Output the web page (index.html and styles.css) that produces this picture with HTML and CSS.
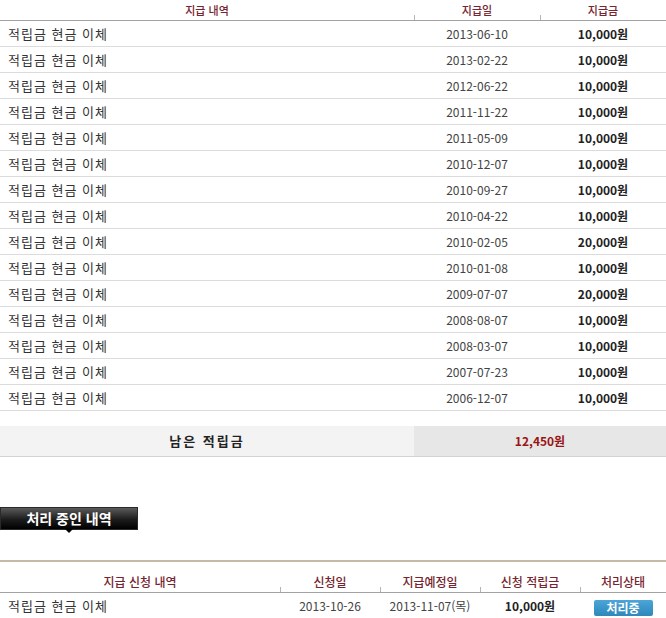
FILE: index.html
```html
<!DOCTYPE html>
<html lang="ko">
<head>
  <meta charset="UTF-8" />
  <meta name="viewport" content="width=device-width, initial-scale=1.0"/>
  <title>적립금 지급 내역</title>
  <link rel="stylesheet" href="styles.css">
</head>
<body>
  <div class="page">
    <table class="list history">
      <colgroup>
        <col class="col-desc" />
        <col class="col-date" />
        <col class="col-amount" />
      </colgroup>
      <thead>
        <tr>
          <th>지급 내역</th>
          <th class="tick">지급일</th>
          <th class="tick">지급금</th>
        </tr>
      </thead>
      <tbody>
        <tr><td class="desc">적립금 현금 이체</td><td class="date">2013-06-10</td><td class="amount">10,000원</td></tr>
        <tr><td class="desc">적립금 현금 이체</td><td class="date">2013-02-22</td><td class="amount">10,000원</td></tr>
        <tr><td class="desc">적립금 현금 이체</td><td class="date">2012-06-22</td><td class="amount">10,000원</td></tr>
        <tr><td class="desc">적립금 현금 이체</td><td class="date">2011-11-22</td><td class="amount">10,000원</td></tr>
        <tr><td class="desc">적립금 현금 이체</td><td class="date">2011-05-09</td><td class="amount">10,000원</td></tr>
        <tr><td class="desc">적립금 현금 이체</td><td class="date">2010-12-07</td><td class="amount">10,000원</td></tr>
        <tr><td class="desc">적립금 현금 이체</td><td class="date">2010-09-27</td><td class="amount">10,000원</td></tr>
        <tr><td class="desc">적립금 현금 이체</td><td class="date">2010-04-22</td><td class="amount">10,000원</td></tr>
        <tr><td class="desc">적립금 현금 이체</td><td class="date">2010-02-05</td><td class="amount">20,000원</td></tr>
        <tr><td class="desc">적립금 현금 이체</td><td class="date">2010-01-08</td><td class="amount">10,000원</td></tr>
        <tr><td class="desc">적립금 현금 이체</td><td class="date">2009-07-07</td><td class="amount">20,000원</td></tr>
        <tr><td class="desc">적립금 현금 이체</td><td class="date">2008-08-07</td><td class="amount">10,000원</td></tr>
        <tr><td class="desc">적립금 현금 이체</td><td class="date">2008-03-07</td><td class="amount">10,000원</td></tr>
        <tr><td class="desc">적립금 현금 이체</td><td class="date">2007-07-23</td><td class="amount">10,000원</td></tr>
        <tr><td class="desc">적립금 현금 이체</td><td class="date">2006-12-07</td><td class="amount">10,000원</td></tr>
      </tbody>
    </table>

    <div class="balance">
      <div class="balance-label">남은 적립금</div>
      <div class="balance-value">12,450원</div>
    </div>

    <div class="section-tab">처리 중인 내역</div>

    <table class="list pending">
      <colgroup>
        <col class="col-req" />
        <col class="col-day" />
        <col class="col-day" />
        <col class="col-day" />
        <col />
      </colgroup>
      <thead>
        <tr>
          <th>지급 신청 내역</th>
          <th class="tick">신청일</th>
          <th class="tick">지급예정일</th>
          <th class="tick">신청 적립금</th>
          <th class="tick">처리상태</th>
        </tr>
      </thead>
      <tbody>
        <tr>
          <td class="desc">적립금 현금 이체</td>
          <td class="date">2013-10-26</td>
          <td class="date">2013-11-07(목)</td>
          <td class="amount">10,000원</td>
          <td class="status"><span class="badge">처리중</span></td>
        </tr>
      </tbody>
    </table>
  </div>
</body>
</html>
```

FILE: styles.css
```css
body {
  margin: 0;
  font-family: "Noto Sans CJK KR", "Noto Sans", sans-serif;
  background-color: white;
  color: #333;
}
.page {
  width: 666px;
}
.list {
  width: 100%;
  border-collapse: collapse;
  table-layout: fixed;
}
.list th {
  position: relative;
  padding: 0;
  font-size: 11px;
  font-weight: 500;
  color: #762530;
  text-align: center;
  border-bottom: 1px solid #a3a3a3;
}
.list th.tick::before {
  content: "";
  position: absolute;
  left: 0;
  bottom: 0;
  width: 1px;
  height: 5px;
  background-color: #b5b5b5;
}
.list td {
  padding: 0;
  height: 25px;
  border-bottom: 1px solid #dcdcdc;
  text-align: center;
  vertical-align: middle;
}
.history th {
  height: 20px;
  line-height: 20px;
}
.col-desc {
  width: 414px;
}
.col-date {
  width: 126px;
}
.desc {
  text-align: left !important;
  padding-left: 8px !important;
  font-size: 13px;
  letter-spacing: 1px;
  color: #333;
}
.date {
  font-size: 12px;
  color: #444;
}
.amount {
  font-size: 12px;
  font-weight: bold;
  color: #222;
}
.balance {
  display: flex;
  height: 30px;
  margin-top: 15px;
  border-bottom: 1px solid #d3d3d3;
  font-weight: bold;
  line-height: 30px;
  text-align: center;
}
.balance-label {
  width: 414px;
  background-color: #f3f3f3;
  font-size: 13px;
  letter-spacing: 2px;
  color: #222;
}
.balance-value {
  flex: 1;
  background-color: #e7e7e7;
  font-size: 12px;
  color: #9a1414;
}
.section-tab {
  position: relative;
  box-sizing: border-box;
  width: 138px;
  height: 23px;
  margin-top: 50px;
  border: 1px solid #2a2a2a;
  background: linear-gradient(#5a5a5a, #1c1c1c 55%, #000);
  color: white;
  font-size: 14px;
  font-weight: bold;
  line-height: 21px;
  text-align: center;
}
.section-tab::after {
  content: "";
  position: absolute;
  left: 64px;
  top: 100%;
  border-left: 4px solid transparent;
  border-right: 4px solid transparent;
  border-top: 4px solid #000;
}
.pending {
  margin-top: 30px;
  border-top: 2px solid #c4baa6;
}
.pending th {
  height: 20px;
  padding-top: 10px;
  line-height: 20px;
  font-size: 12px;
}
.col-req {
  width: 280px;
}
.col-day {
  width: 100px;
}
.badge {
  display: inline-block;
  width: 59px;
  height: 16px;
  line-height: 16px;
  border-radius: 2px;
  background: linear-gradient(#4ba5d8, #2f87bb);
  color: white;
  font-size: 12px;
  font-weight: bold;
}
```
